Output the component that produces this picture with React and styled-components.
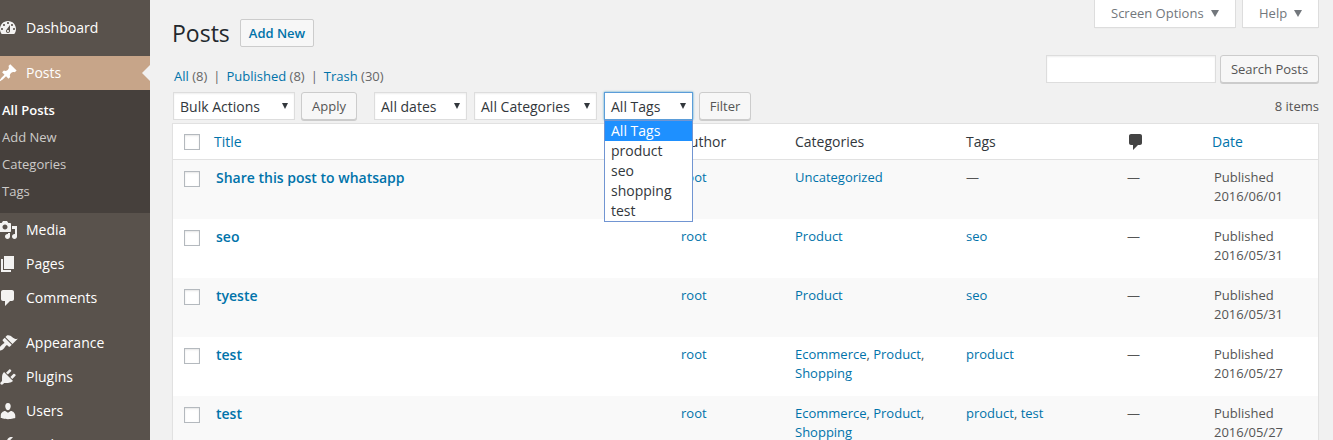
import React from "react";
import styled, { createGlobalStyle, css } from "styled-components";

const Global = createGlobalStyle`
  * { box-sizing: border-box; }
  html, body { margin: 0; height: 440px; overflow: hidden; background: #f1f1f1; }
  body { font: 13px/19px "Open Sans", sans-serif; color: #555; }
`;

const Page = styled.div`
  display: flex;
  height: 440px;
  overflow: hidden;
`;

/* ---------- admin menu ---------- */
const Sidebar = styled.nav`
  flex: 0 0 150px;
  height: 440px;
  overflow: hidden;
  background: #59524c;
  display: flex;
  flex-direction: column;
`;
const MenuItem = styled.a`
  position: relative;
  flex: 0 0 34px;
  display: flex;
  align-items: center;
  gap: 8px;
  margin-top: ${(p) => (p.$spaced ? 11 : 0)}px;
  background: ${(p) => (p.$current ? "#c7a589" : "transparent")};
  color: ${(p) => (p.$current ? "#fff" : "#f3f2f1")};
  font-size: 14px;
  line-height: 18px;
  white-space: nowrap;
  span { color: #fff; }
`;
const MenuIcon = styled.svg`
  flex: none;
  width: 20px;
  height: 20px;
  margin-left: -2px;
  fill: currentColor;
`;
const CurrentArrow = styled.i`
  position: absolute;
  right: 0;
  top: 9px;
  border: 8px solid transparent;
  border-left: 0;
  border-right-color: #f1f1f1;
`;
const SubMenu = styled.div`
  flex: 0 0 123px;
  padding: 7px 2px 8px;
  background: #46403c;
`;
const SubItem = styled.a`
  display: block;
  height: 27px;
  line-height: 27px;
  color: ${(p) => (p.$active ? "#fff" : "#cdcbc9")};
  font-weight: ${(p) => (p.$active ? 600 : 400)};
`;

/* ---------- page head ---------- */
const Main = styled.main`
  flex: 1;
  min-width: 0;
  padding: 0 14px 0 22px;
`;
const Head = styled.header`
  display: flex;
  justify-content: space-between;
  height: 92px;
`;
const HeadLeft = styled.div`
  padding-top: 19px;
`;
const TitleRow = styled.div`
  display: flex;
  align-items: center;
  gap: 10px;
  height: 28px;
`;
const Title = styled.h1`
  margin: 0;
  width: 58px;
  font-size: 23px;
  font-weight: 400;
  line-height: 28px;
  color: #23282d;
  white-space: nowrap;
`;
const AddNew = styled.a`
  height: 28px;
  width: 74px;
  border: 1px solid #ccc;
  border-radius: 2px;
  background: #f7f7f7;
  color: #0073aa;
  font-weight: 600;
  line-height: 26px;
  text-align: center;
`;
const Views = styled.div`
  display: flex;
  gap: 6px;
  margin-top: 20px;
  padding-left: 2px;
  color: #666;
  white-space: nowrap;
`;
const Link = styled.a`
  color: #0073aa;
`;
const HeadRight = styled.div`
  display: flex;
  flex-direction: column;
  align-items: flex-end;
  gap: 27px;
`;
const MetaTabs = styled.div`
  display: flex;
  gap: 6px;
`;
const MetaTab = styled.button`
  display: flex;
  align-items: center;
  justify-content: space-between;
  width: ${(p) => p.$w}px;
  height: 28px;
  padding: 0 16px 1px 16px;
  border: 1px solid #ddd;
  border-top: 0;
  background: #fff;
  box-shadow: 0 1px 1px -1px rgba(0, 0, 0, 0.1);
  color: #72777c;
  font: 13px "Open Sans", sans-serif;
  white-space: nowrap;
`;
const Down = styled.i`
  border: ${(p) => p.$half || 4}px solid transparent;
  border-top: ${(p) => p.$tall || 7}px solid ${(p) => p.$color || "#72777c"};
  border-bottom: 0;
`;
const Search = styled.div`
  display: flex;
  gap: 4px;
`;
const SearchInput = styled.input`
  width: 170px;
  height: 28px;
  border: 1px solid #ddd;
  background: #fff;
  box-shadow: inset 0 1px 2px rgba(0, 0, 0, 0.07);
  outline: 0;
`;
const Button = styled.button`
  width: ${(p) => p.$w}px;
  height: 28px;
  margin-left: ${(p) => p.$ml || 0}px;
  padding: 0;
  border: 1px solid #ccc;
  border-radius: 3px;
  background: #f7f7f7;
  box-shadow: 0 1px 0 #ccc;
  color: #555;
  font: 13px/26px "Open Sans", sans-serif;
  white-space: nowrap;
`;

/* ---------- filter bar ---------- */
const FilterBar = styled.div`
  display: flex;
  align-items: center;
  height: 28px;
  margin-bottom: 3px;
  padding-left: 1px;
`;
const SelectBox = styled.div`
  position: relative;
  display: flex;
  align-items: center;
  justify-content: space-between;
  width: ${(p) => p.$w}px;
  height: 28px;
  margin-left: ${(p) => p.$ml || 0}px;
  padding: 0 6px;
  border: 1px solid #ddd;
  background: #fff;
  box-shadow: inset 0 1px 2px rgba(0, 0, 0, 0.07);
  color: #32373c;
  font-size: 14px;
  white-space: nowrap;
  ${(p) =>
    p.$open &&
    css`
      border-color: #5b9dd9;
      box-shadow: 0 0 2px rgba(30, 140, 190, 0.8);
    `}
`;
const Options = styled.div`
  position: absolute;
  z-index: 2;
  top: 27px;
  left: -1px;
  width: 89px;
  border: 1px solid #7195d2;
  background: #fff;
`;
const Option = styled.div`
  height: 20px;
  padding-left: 6px;
  line-height: 20px;
  background: ${(p) => (p.$on ? "#1e90ff" : "#fff")};
  color: ${(p) => (p.$on ? "#fff" : "#32373c")};
`;
const Count = styled.span`
  margin-left: auto;
`;

/* ---------- posts table ---------- */
const Table = styled.div`
  border: 1px solid #e1e1e1;
  background: #fff;
  box-shadow: 0 1px 1px rgba(0, 0, 0, 0.04);
`;
const Row = styled.div`
  display: grid;
  grid-template-columns: 41px 467px 114px 171px 161px 85px 1fr;
  height: 59px;
  padding-top: 8px;
  background: ${(p) => (p.$alt ? "#f9f9f9" : "#fff")};
`;
const HeadRow = styled(Row)`
  height: 36px;
  border-bottom: 1px solid #e1e1e1;
  color: #32373c;
  font-size: 14px;
`;
const Cell = styled.div`
  padding-left: ${(p) => p.$pl || 0}px;
  white-space: pre-line;
`;
const Check = styled.span`
  display: block;
  width: 16px;
  height: 16px;
  margin: ${(p) => p.$mt}px 0 0 11px;
  border: 1px solid #b4b9be;
  background: #fff;
  box-shadow: inset 0 1px 2px rgba(0, 0, 0, 0.1);
`;
const PostTitle = styled.a`
  color: #0073aa;
  font-size: 14px;
  font-weight: 600;
`;
const HeadComment = styled.svg`
  display: block;
  width: 20px;
  height: 20px;
  margin-left: -1px;
  fill: #444;
`;

const ICONS = {
  dashboard:
    "M3.76 16h12.48c1.1-1.37 1.76-3.11 1.76-5 0-4.42-3.58-8-8-8s-8 3.58-8 8c0 1.89.66 3.63 1.76 5zM10 4c.55 0 1 .45 1 1s-.45 1-1 1-1-.45-1-1 .45-1 1-1zM6 6c.55 0 1 .45 1 1s-.45 1-1 1-1-.45-1-1 .45-1 1-1zm8 0c.55 0 1 .45 1 1s-.45 1-1 1-1-.45-1-1 .45-1 1-1zm-5.37 5.55L12 7v6c0 1.1-.9 2-2 2s-2-.9-2-2c0-.57.24-1.08.63-1.45zM4 10c.55 0 1 .45 1 1s-.45 1-1 1-1-.45-1-1 .45-1 1-1zm12 0c.55 0 1 .45 1 1s-.45 1-1 1-1-.45-1-1 .45-1 1-1zm-5 3c0-.55-.45-1-1-1s-1 .45-1 1 .45 1 1 1 1-.45 1-1z",
  posts:
    "M10.44 3.02l1.82-1.82 6.36 6.35-1.83 1.82c-1.05-.68-2.48-.57-3.41.36l-.75.75c-.92.93-1.04 2.35-.35 3.41l-1.83 1.82-2.41-2.41-2.8 2.79c-.42.42-3.38 2.71-3.8 2.29s1.86-3.39 2.28-3.81l2.79-2.79L4.1 9.36l1.83-1.82c1.05.69 2.48.57 3.4-.36l.75-.75c.93-.92 1.05-2.35.36-3.41z",
  media:
    "M13 11V4c0-.55-.45-1-1-1h-1.67L9 1H5L3.67 3H2c-.55 0-1 .45-1 1v7c0 .55.45 1 1 1h10c.55 0 1-.45 1-1zM7 4.5c1.38 0 2.5 1.12 2.5 2.5S8.38 9.5 7 9.5 4.5 8.38 4.5 7 5.62 4.5 7 4.5zM14 6h5v10.5c0 1.38-1.12 2.5-2.5 2.5S14 17.88 14 16.5s1.12-2.5 2.5-2.5c.17 0 .34.02.5.05V9h-3V6zm-4 8.05V13h2v3.5c0 1.38-1.12 2.5-2.5 2.5S7 17.88 7 16.5 8.12 14 9.5 14c.17 0 .34.02.5.05z",
  pages: "M6 15V2h10v13H6zm-1 1h8v2H3V5h2v11z",
  comments:
    "M5 2h9c1.1 0 2 .9 2 2v7c0 1.1-.9 2-2 2h-2l-5 5v-5H5c-1.1 0-2-.9-2-2V4c0-1.1.9-2 2-2z",
  appearance:
    "M14.48 11.06L7.41 3.99l1.5-1.5c.5-.56 2.3-.47 3.51.32 1.21.8 1.43 1.28 2.91 2.1 1.18.64 2.45 1.26 4.45.85zm-.71.71L6.7 4.7 4.93 6.47c-.39.39-.39 1.02 0 1.41l1.06 1.06c.39.39.39 1.03 0 1.42-.6.6-1.43 1.11-2.21 1.69-.35.26-.7.53-1.01.84C1.43 14.23.4 16.08 1.4 17.07c.99 1 2.84-.03 4.18-1.36.31-.31.58-.66.85-1.02.57-.78 1.08-1.61 1.69-2.21.39-.39 1.02-.39 1.41 0l1.06 1.06c.39.39 1.02.39 1.41 0z",
  plugins:
    "M13.11 4.36L9.87 7.6 8 5.73l3.24-3.24c.35-.34 1.05-.2 1.56.32.52.51.66 1.21.31 1.55zm-8 1.77l.91-1.12 9.01 9.01-1.19.84c-.71.71-2.63 1.16-3.82 1.16H6.14L4.9 17.26c-.59.59-1.54.59-2.12 0-.59-.58-.59-1.53 0-2.12l1.24-1.24v-3.88c0-1.13.4-3.19 1.09-3.89zm7.26 3.97l3.24-3.24c.34-.35 1.04-.21 1.55.31.52.51.66 1.21.31 1.55l-3.24 3.25z",
  users:
    "M10 9.25c-2.27 0-2.73-3.44-2.73-3.44C7 4.02 7.82 2 9.97 2c2.16 0 2.98 2.02 2.71 3.81 0 0-.41 3.44-2.68 3.44zm0 2.57L12.72 10c2.39 0 4.52 2.33 4.52 4.53v2.49s-3.65 1.13-7.24 1.13c-3.65 0-7.24-1.13-7.24-1.13v-2.49c0-2.25 1.94-4.48 4.47-4.48z",
  tools:
    "M16.68 9.77c-1.34 1.34-3.3 1.67-4.95.99l-5.41 6.52c-.99.99-2.59.99-3.58 0s-.99-2.59 0-3.57l6.52-5.42c-.68-1.65-.35-3.61.99-4.95 1.28-1.28 3.12-1.62 4.72-1.06l-2.89 2.89 2.82 2.82 2.86-2.87c.53 1.58.18 3.39-1.08 4.65zM3.81 16.21c.4.39 1.04.39 1.43 0 .4-.4.4-1.04 0-1.43-.39-.4-1.03-.4-1.43 0-.39.39-.39 1.03 0 1.43z",
};

function Item({ icon, label, current, spaced }) {
  return (
    <MenuItem $current={current} $spaced={spaced}>
      <MenuIcon viewBox="0 0 20 20">
        <path d={ICONS[icon]} />
      </MenuIcon>
      <span>{label}</span>
      {current && <CurrentArrow />}
    </MenuItem>
  );
}

const Caret = () => <Down $half={3.5} $tall={6} $color="#32373c" />;

const POSTS = [
  { title: "Share this post to whatsapp", cats: ["Uncategorized"], tags: [], date: "2016/06/01" },
  { title: "seo", cats: ["Product"], tags: ["seo"], date: "2016/05/31" },
  { title: "tyeste", cats: ["Product"], tags: ["seo"], date: "2016/05/31" },
  { title: "test", cats: ["Ecommerce", "Product", "Shopping"], tags: ["product"], date: "2016/05/27" },
  { title: "test", cats: ["Ecommerce", "Product", "Shopping"], tags: ["product", "test"], date: "2016/05/27" },
];

const Terms = ({ items }) =>
  items.length
    ? items.map((t, i) => (
        <React.Fragment key={t}>
          {i > 0 && (i === 2 ? ",\n" : ", ")}
          <Link>{t}</Link>
        </React.Fragment>
      ))
    : "—";

export default function App() {
  return (
    <Page>
      <Global />
      <Sidebar>
        <Item icon="dashboard" label="Dashboard" spaced />
        <Item icon="posts" label="Posts" current spaced />
        <SubMenu>
          <SubItem $active>All Posts</SubItem>
          <SubItem>Add New</SubItem>
          <SubItem>Categories</SubItem>
          <SubItem>Tags</SubItem>
        </SubMenu>
        <Item icon="media" label="Media" />
        <Item icon="pages" label="Pages" />
        <Item icon="comments" label="Comments" />
        <Item icon="appearance" label="Appearance" spaced />
        <Item icon="plugins" label="Plugins" />
        <Item icon="users" label="Users" />
        <Item icon="tools" label="Tools" />
      </Sidebar>
      <Main>
        <Head>
          <HeadLeft>
            <TitleRow>
              <Title>Posts</Title>
              <AddNew>Add New</AddNew>
            </TitleRow>
            <Views>
              <span><Link>All</Link> (8)</span>
              <span>|</span>
              <span><Link>Published</Link> (8)</span>
              <span>|</span>
              <span><Link>Trash</Link> (30)</span>
            </Views>
          </HeadLeft>
          <HeadRight>
            <MetaTabs>
              <MetaTab $w={142}>Screen Options<Down /></MetaTab>
              <MetaTab $w={77}>Help<Down /></MetaTab>
            </MetaTabs>
            <Search>
              <SearchInput />
              <Button $w={99}>Search Posts</Button>
            </Search>
          </HeadRight>
        </Head>
        <FilterBar>
          <SelectBox $w={122}>Bulk Actions<Caret /></SelectBox>
          <Button $w={56} $ml={6}>Apply</Button>
          <SelectBox $w={93} $ml={17}>All dates<Caret /></SelectBox>
          <SelectBox $w={123} $ml={7}>All Categories<Caret /></SelectBox>
          <SelectBox $w={89} $ml={7} $open>
            All Tags
            <Caret />
            <Options>
              <Option $on>All Tags</Option>
              <Option>product</Option>
              <Option>seo</Option>
              <Option>shopping</Option>
              <Option>test</Option>
            </Options>
          </SelectBox>
          <Button $w={52} $ml={6}>Filter</Button>
          <Count>8 items</Count>
        </FilterBar>
        <Table>
          <HeadRow>
            <Check $mt={2} />
            <Cell><Link>Title</Link></Cell>
            <Cell>Author</Cell>
            <Cell>Categories</Cell>
            <Cell>Tags</Cell>
            <HeadComment viewBox="0 0 20 20"><path d={ICONS.comments} /></HeadComment>
            <Cell><Link>Date</Link></Cell>
          </HeadRow>
          {POSTS.map((p, i) => (
            <Row key={i} $alt={i % 2 === 0}>
              <Check $mt={3} />
              <Cell $pl={2}><PostTitle>{p.title}</PostTitle></Cell>
              <Cell><Link>root</Link></Cell>
              <Cell><Terms items={p.cats} /></Cell>
              <Cell><Terms items={p.tags} /></Cell>
              <Cell>—</Cell>
              <Cell $pl={2}>{"Published\n" + p.date}</Cell>
            </Row>
          ))}
        </Table>
      </Main>
    </Page>
  );
}
